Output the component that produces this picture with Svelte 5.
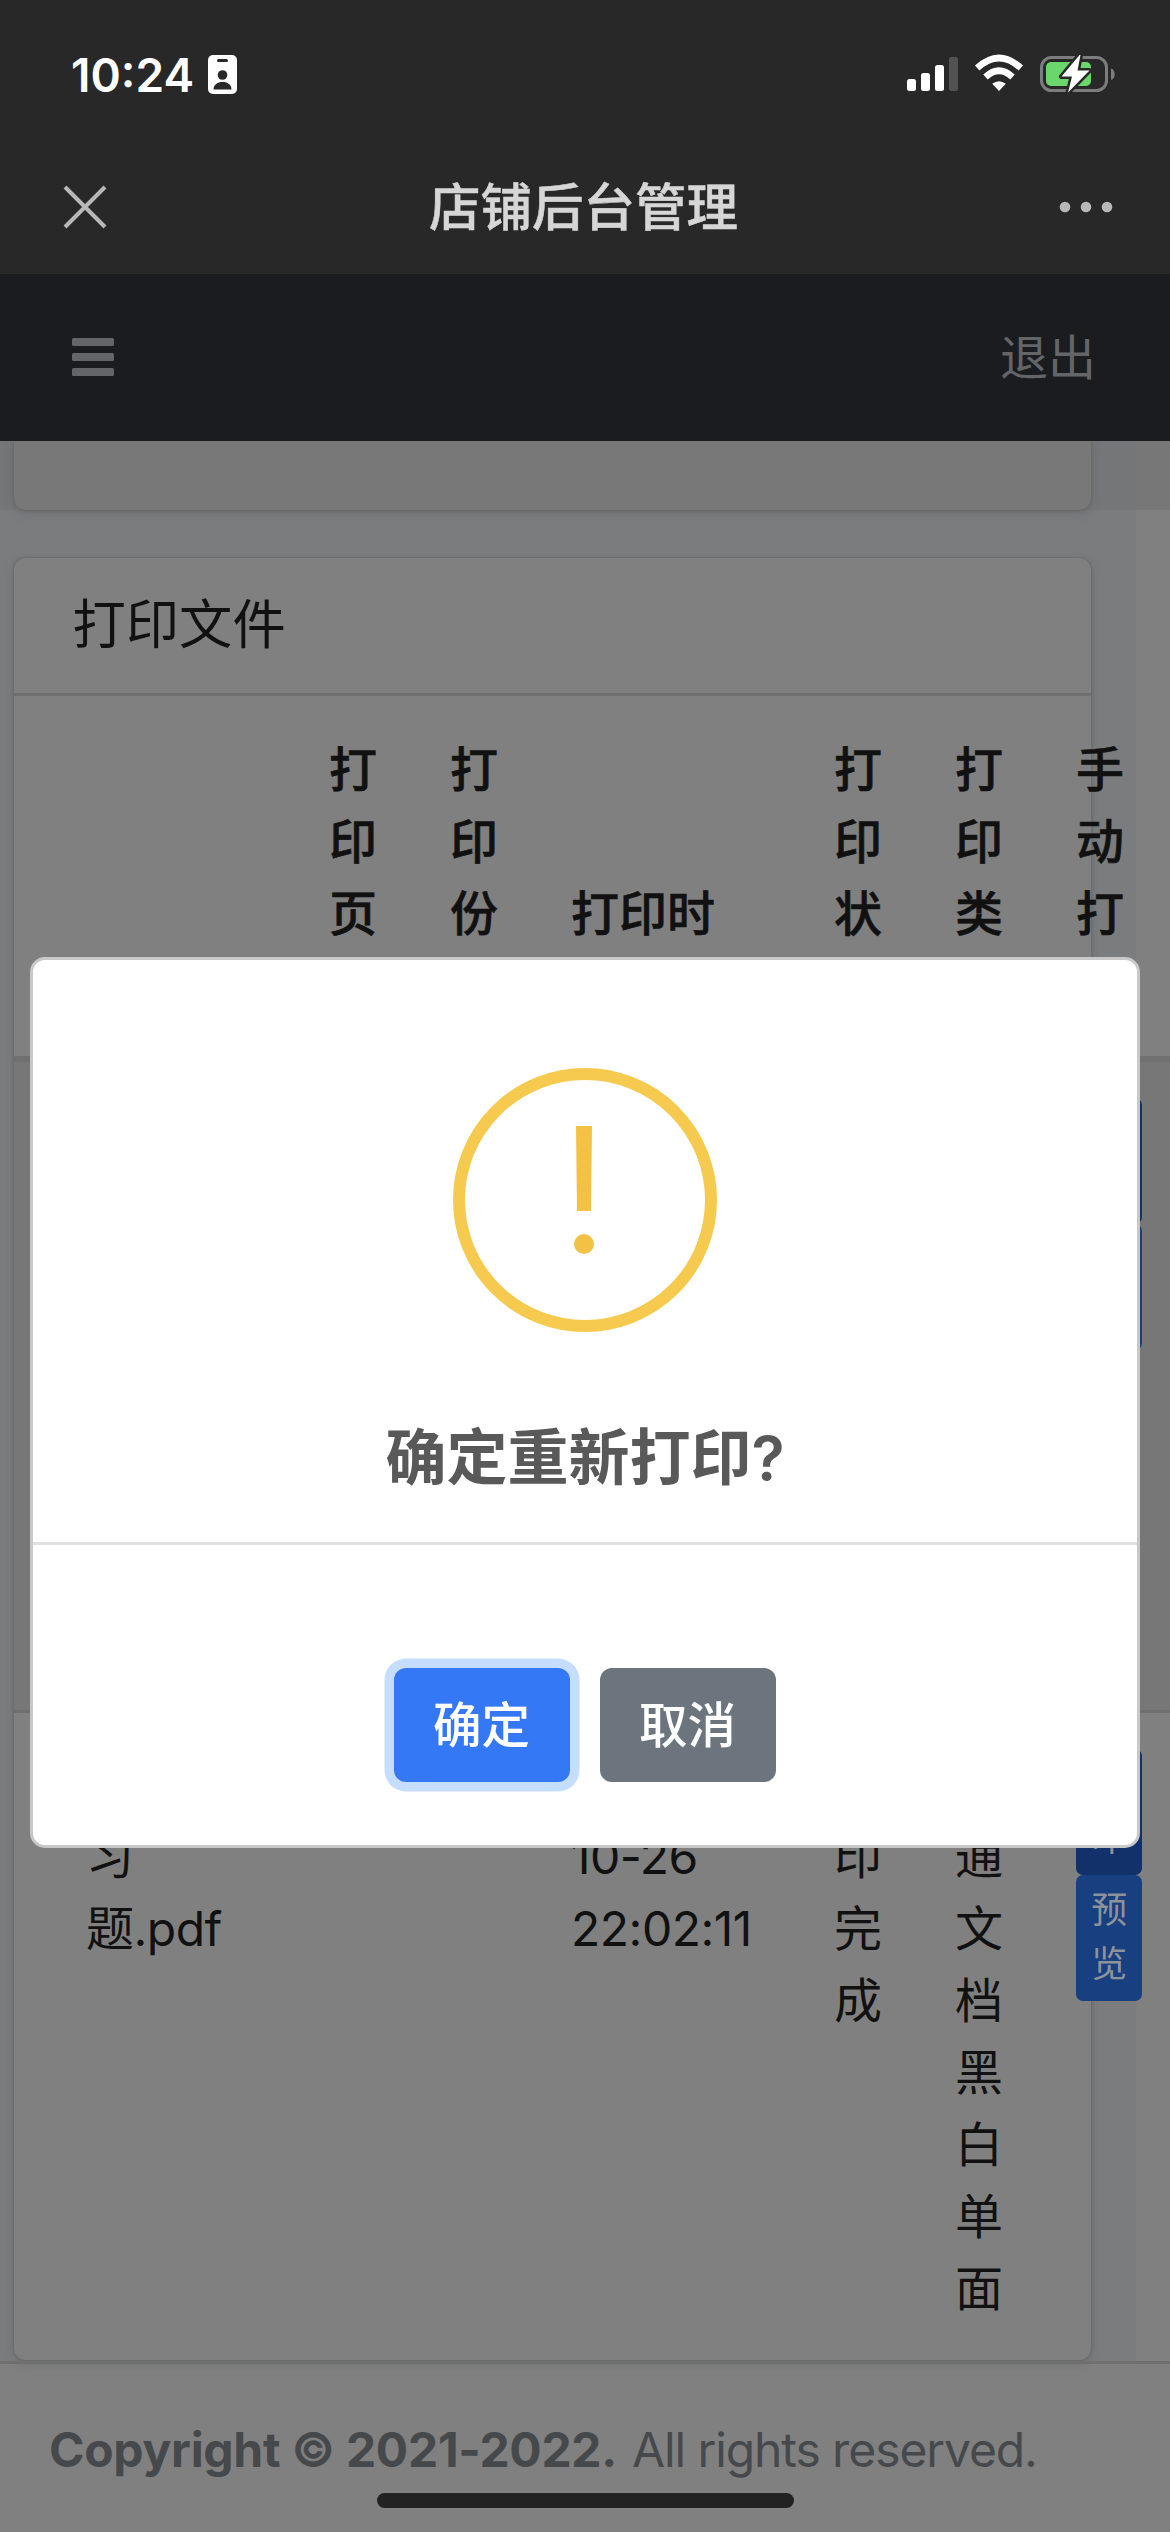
<script>
  const headers = [
    ['文', '件', '名'],
    ['打', '印', '页', '数'],
    ['打', '印', '份', '数'],
    ['打印时', '间'],
    ['打', '印', '状', '态'],
    ['打', '印', '类', '型'],
    ['手', '动', '打', '印']
  ];
  const columns = [
    ['练', '习', '题.pdf'],
    ['1'],
    ['1'],
    ['2022-', '10-26', '22:02:11'],
    ['打', '印', '完', '成'],
    ['普', '通', '文', '档', '黑', '白', '单', '面']
  ];
  const rows = [{ striped: true }, { striped: false }];
</script>

<div class="screen">
  <header class="chrome">
    <div class="status">
      <div class="clock">
        <span class="time">10:24</span>
        <svg class="badge" viewBox="0 0 29 39">
          <rect width="29" height="39" rx="5" fill="#fff" />
          <rect x="9" y="4" width="11" height="3" rx="1.5" fill="#282828" />
          <circle cx="14.5" cy="20" r="4.8" fill="#282828" />
          <path d="M5.5 34.5c0-5 4-7.5 9-7.5s9 2.500 9 7.500z" fill="#282828" />
        </svg>
      </div>
      <svg class="indicators" viewBox="0 0 210 40">
        <g fill="#fff">
          <rect x="0" y="25" width="9" height="12" rx="2.500" />
          <rect x="14" y="19" width="9" height="18" rx="2.500" />
          <rect x="28" y="11" width="9" height="26" rx="2.500" />
          <rect x="42" y="3" width="9" height="34" rx="2.500" fill="#535353" />
          <path d="M92 37 L85.200 29.800 Q92 24.500 98.800 29.800 Z" />
        </g>
        <g fill="none" stroke="#fff" stroke-width="6.600">
          <path d="M70.200 14 Q92 -6 113.800 14" />
          <path d="M78.500 23 Q92 10.500 105.500 23" />
        </g>
        <rect x="134.500" y="3.500" width="65" height="33" rx="10" fill="none" stroke="#7d7d7d" stroke-width="3" />
        <path d="M204 14.500c5 1.500 5 10 0 11.500z" fill="#7d7d7d" />
        <rect x="139" y="8" width="45" height="24" rx="5" fill="#6bd66c" />
        <path d="M172.500 1 L154.500 22.500 H165 L161 38.500 L182.500 16.500 H170.500 L173.500 1z" fill="#fff" stroke="#282828" stroke-width="5" stroke-linejoin="round" paint-order="stroke" />
      </svg>
    </div>
    <div class="titlebar">
      <svg class="close" viewBox="0 0 44 44"><path d="M2 2L42 42M42 2L2 42" stroke="#b8b8b8" stroke-width="4" /></svg>
      <h1>店铺后台管理</h1>
      <svg class="more" viewBox="0 0 54 12" fill="#b8b8b8"><circle cx="6" cy="6" r="5.300" /><circle cx="27" cy="6" r="5.300" /><circle cx="48" cy="6" r="5.300" /></svg>
    </div>
  </header>

  <nav>
    <svg class="burger" viewBox="0 0 42 38" fill="#646569"><rect width="42" height="8" rx="1.500" /><rect y="15" width="42" height="8" rx="1.500" /><rect y="30" width="42" height="8" rx="1.500" /></svg>
    <span>退出</span>
  </nav>

  <main>
    <section class="card previous"></section>
    <section class="card files">
      <h2>打印文件</h2>
      <div class="table">
        <div class="row head">
          {#each headers as lines}
            <div class="cell">{#each lines as line}<div>{line}</div>{/each}</div>
          {/each}
        </div>
        {#each rows as row}
          <div class="row body" class:striped={row.striped}>
            {#each columns as lines}
              <div class="cell">{#each lines as line}<div>{line}</div>{/each}</div>
            {/each}
            <div class="cell actions">
              <span class="btn print">打<br />印</span>
              <span class="btn">预<br />览</span>
            </div>
          </div>
        {/each}
      </div>
    </section>
  </main>

  <footer><strong>Copyright © 2021-2022.</strong><span>All rights reserved.</span></footer>
  <div class="home"></div>

  <div class="modal">
    <svg class="warning" viewBox="0 0 264 264">
      <circle cx="132" cy="132" r="126" fill="none" stroke="#f6ca4e" stroke-width="12" />
      <path d="M123 58h16l-1 85h-14z" fill="#f3c244" />
      <circle cx="131" cy="176" r="10" fill="#f3c244" />
    </svg>
    <h3>确定重新打印?</h3>
    <div class="choices">
      <button class="ok">确定</button>
      <button class="cancel">取消</button>
    </div>
  </div>
</div>

<style>
  :global(body) { margin: 0; background: #808080; }
  .screen {
    position: relative;
    width: 1170px;
    height: 2532px;
    overflow: hidden;
    display: flex;
    flex-direction: column;
    background: #808080;
    color: #111;
    font-family: Inter, "Noto Sans CJK SC", sans-serif;
    font-size: 48px;
    line-height: 72px;
  }
  .screen * { box-sizing: border-box; }
  h1, h2, h3 { margin: 0; }
  svg { display: block; flex: none; }

  .chrome { height: 274px; flex: none; background: #282828; }
  .status { height: 140px; padding: 54px 53px 0 71px; display: flex; justify-content: space-between; }
  .clock { display: flex; gap: 14px; align-items: flex-start; }
  .time { width: 123px; color: #fff; font-size: 46px; font-weight: 600; line-height: 42px; white-space: nowrap; }
  .badge { width: 29px; height: 39px; margin-top: 1px; }
  .indicators { width: 210px; height: 40px; }
  .titlebar { height: 134px; padding: 0 57px 0 63px; display: grid; grid-template-columns: 54px 1fr 54px; align-items: center; }
  .close { width: 44px; height: 44px; }
  .more { width: 54px; height: 12px; }
  h1 { padding-right: 9px; font-size: 51.5px; font-weight: 500; color: #d6d6d6; text-align: center; -webkit-text-stroke: 0.5px #d6d6d6; }

  nav { height: 167px; flex: none; padding: 0 74px 0 72px; display: flex; align-items: center; justify-content: space-between; background: #1b1c20; color: #646569; }
  .burger { width: 42px; height: 38px; margin-top: -2px; }

  main {
    height: 1920px;
    flex: none;
    padding: 0 0 0 14px;
    background:
      linear-gradient(#747678, #747678) 0 0 / 1136px 69px no-repeat,
      linear-gradient(#777, #777) 0 0 / 100% 69px no-repeat,
      linear-gradient(#7a7c7e, #7a7c7e) 0 0 / 1136px 100% no-repeat;
  }
  .card { width: 1077px; background: #808080; border-radius: 12px; box-shadow: 0 0 3px #606163, 0 3px 9px #6c6d6f; }
  .previous { height: 69px; margin-bottom: 48px; background: #787878; border-radius: 0 0 12px 12px; clip-path: inset(0 -12px -14px -12px); }
  .files { height: 1802px; }
  h2 { height: 138px; padding: 0 58.5px; border-bottom: 3px solid #6f6f70; font-size: 53.3px; font-weight: 400; line-height: 133px; }
  .table { width: 1156px; }
  .row { display: grid; grid-template-columns: 279px 121px 121px 263px 121px 121px 130px; }
  .cell { padding: 36px 0 36px 36px; white-space: nowrap; }
  .cell:first-child { padding-left: 72px; }
  .head { height: 366px; border-bottom: 6px solid #707071; font-weight: 500; align-items: end; -webkit-text-stroke: 0.6px #111; }
  .head .cell { padding: 38px 0 34px 36px; }
  .head .cell:first-child { visibility: hidden; }
  .body { height: 648px; letter-spacing: -0.5px; }
  .body + .body { height: 651px; border-top: 3px solid #6f6f70; }
  .striped { background: #777778; }
  .actions { display: flex; flex-direction: column; align-items: flex-start; }
  .btn { width: 66px; height: 126px; padding: 8px 0 10px; border-radius: 7px; background: #183f80; color: #8d929b; font-size: 36px; line-height: 54px; text-align: center; }
  .print { background: #12306a; }

  footer { height: 171px; flex: none; padding: 50px 50px 0 49px; border-top: 3px solid #6f6f70; color: #46494c; display: flex; gap: 15px; white-space: nowrap; letter-spacing: -1.1px; }
  strong { font-weight: 700; letter-spacing: -0.3px; }
  .home { position: absolute; left: 377px; top: 2493px; width: 417px; height: 15px; border-radius: 8px; background: #222; }

  .modal {
    position: absolute;
    left: 30px;
    top: 957px;
    width: 1110px;
    height: 891px;
    padding-top: 108px;
    display: flex;
    flex-direction: column;
    align-items: center;
    background: #fff;
    border: 3px solid #c8c8c8;
    border-radius: 15px;
  }
  .warning { width: 264px; height: 264px; }
  h3 { width: 100%; height: 213px; padding-top: 90px; border-bottom: 3px solid #e0e0e0; color: #595959; font-size: 61px; font-weight: 600; text-align: center; }
  .choices { display: flex; gap: 30px; padding-top: 123px; margin-left: -1px; }
  button { width: 176px; height: 114px; padding: 2px 0 0; border: 0; border-radius: 12px; color: #fff; font: 500 48.5px/112px Inter, "Noto Sans CJK SC", sans-serif; }
  .ok { background: #3478f5; box-shadow: 0 0 0 9.5px #c5deff; }
  .cancel { background: #6c757d; }
</style>
